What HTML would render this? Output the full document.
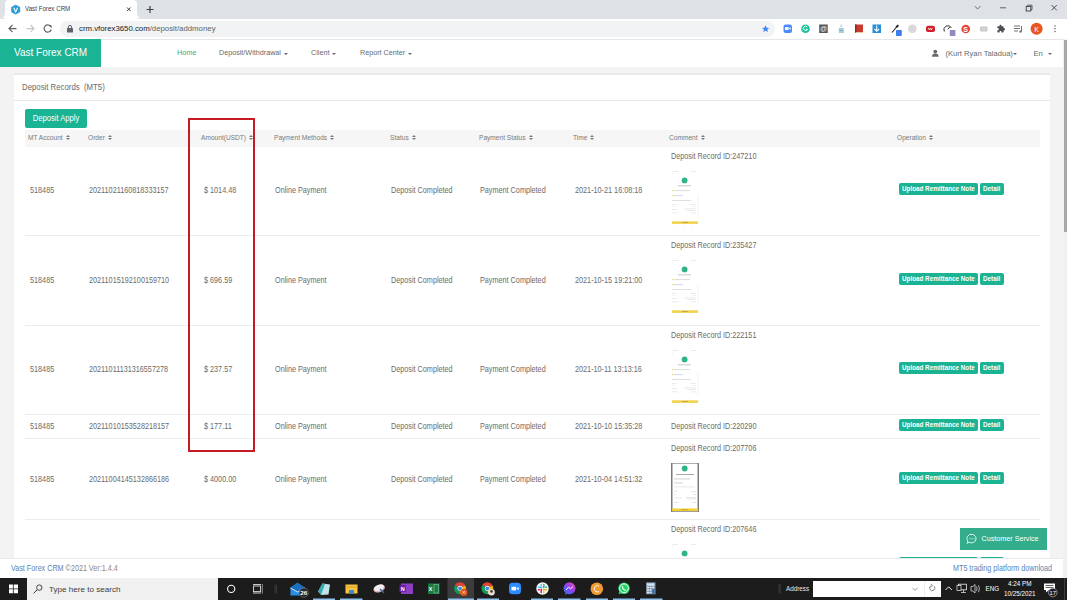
<!DOCTYPE html>
<html><head><meta charset="utf-8">
<style>
*{margin:0;padding:0;box-sizing:border-box}
html,body{width:1067px;height:600px;overflow:hidden;background:#f3f3f4;font-family:"Liberation Sans",sans-serif;color:#676a6c}
.a{position:absolute;white-space:nowrap}
#tabs{left:0;top:0;width:1067px;height:18.7px;background:#dee1e6}
#tab{left:5px;top:0;width:132px;height:19px;background:#fff;border-radius:4px 4px 0 0}
#toolbar{left:0;top:18.7px;width:1067px;height:20.3px;background:#fff}
#url{left:60px;top:21.3px;width:715px;height:15.5px;background:#f1f3f4;border-radius:8px}
#hdr{left:0;top:39px;width:1067px;height:28px;background:#fff}
#logo{left:0;top:39px;width:101px;height:28px;background:#1ab394;color:#fff;font-size:10px;line-height:28px;padding-left:14px}
.nav{top:47px;font-size:7.2px;line-height:12px;color:#676a6c}
.caret{display:inline-block;width:0;height:0;border-left:2.2px solid transparent;border-right:2.2px solid transparent;border-top:2.2px solid #676a6c;vertical-align:middle;margin-left:3px;position:relative;top:0.8px}
#panel{left:14px;top:73px;width:1036px;height:492px;background:#fff;border-top:2px solid #e9eaeb}
#ptitle{left:22px;top:81.5px;font-size:7.8px;line-height:12px;transform:scaleY(1.08);transform-origin:0 50%}
#pline{left:14px;top:100px;width:1036px;height:1px;background:#e7eaec}
.btn{background:#1ab394;color:#fff;border-radius:2px}
#dapply{left:25px;top:109px;width:62px;height:18.5px;font-size:7.6px;line-height:18.5px;text-align:center}
#thead{left:25px;top:130px;width:1015px;height:17px;background:#f6f6f6}
.th{top:133px;font-size:6.6px;line-height:10px;color:#7a7a7a}
.sort{display:inline-block;margin-left:3px;width:4px;height:5.4px;position:relative;vertical-align:-0.3px}.sort:before{content:"";position:absolute;left:0;top:0;border-left:2px solid transparent;border-right:2px solid transparent;border-bottom:2.3px solid #777}.sort:after{content:"";position:absolute;left:0;top:3.1px;border-left:2px solid transparent;border-right:2px solid transparent;border-top:2.3px solid #777}
.rl{left:25px;width:1015px;height:1px;background:#ececec}
.td{font-size:7.25px;line-height:10px;color:#6b6b6b;transform:scaleY(1.18);transform-origin:0 0}
.ub{font-size:6.3px;font-weight:bold;line-height:12.5px;height:12.5px;color:#fff;background:#1ab394;border-radius:2px}
#foot{left:0;top:558px;width:1063px;height:20px;background:#fff;border-top:1px solid #eaeaea}
#taskbar{left:0;top:578px;width:1067px;height:22px;background:#1c1c1c}
</style></head><body>
<div class="a" id="tabs"></div>
<div class="a" id="tab"></div>
<div class="a" id="toolbar"></div>
<div class="a" id="url"></div>
<svg class="a" style="left:0;top:0" width="1067" height="40" viewBox="0 0 1067 40">
 <!-- tab flare -->
 <path d="M0 18 Q5 18 5 13 L5 18 Z" fill="#fff"/>
 <path d="M137 13 Q137 18 142 18 L137 18 Z" fill="#fff"/>
 <!-- favicon -->
 <path d="M15.7 5 L19.9 7.3 L19.9 11.9 L15.7 14.2 L11.5 11.9 L11.5 7.3 Z" fill="#2b9bd6" stroke="#2b9bd6" stroke-width="0.6" stroke-linejoin="round"/>
 <path d="M13.8 7.7 L15.7 11.9 L17.6 7.7" stroke="#fff" stroke-width="1.1" fill="none"/>
 <!-- tab close x -->
 <path d="M127 7.5 L130.6 11.1 M130.6 7.5 L127 11.1" stroke="#3c4043" stroke-width="1"/>
 <!-- new tab + -->
 <path d="M150 6 L150 13 M146.5 9.5 L153.5 9.5" stroke="#3c4043" stroke-width="1.2"/>
 <!-- window controls -->
 <path d="M974.8 6.2 L977.6 9 L980.4 6.2" stroke="#5f6368" stroke-width="0.9" fill="none"/>
 <path d="M1000 7.8 L1006 7.8" stroke="#5f6368" stroke-width="1"/>
 <rect x="1026.2" y="6.4" width="4.6" height="4.6" fill="none" stroke="#3c4043" stroke-width="0.9"/>
 <path d="M1027.6 6.4 L1027.6 5.2 L1032 5.2 L1032 9.6 L1030.8 9.6" fill="none" stroke="#3c4043" stroke-width="0.8"/>
 <path d="M1051.5 5 L1056.8 10.3 M1056.8 5 L1051.5 10.3" stroke="#3c4043" stroke-width="0.9"/>
 <!-- toolbar -->
 <path d="M16.5 28.6 L9 28.6 M12.5 25 L9 28.6 L12.5 32.2" stroke="#5f6368" stroke-width="1.2" fill="none"/>
 <path d="M26.5 28.6 L34 28.6 M30.5 25 L34 28.6 L30.5 32.2" stroke="#c5c7ca" stroke-width="1.2" fill="none"/>
 <path d="M50.6 26.3 A3.6 3.6 0 1 0 51.2 29.5" stroke="#5f6368" stroke-width="1.2" fill="none"/>
 <path d="M48.6 25.2 L51.6 25.2 L51.6 28.2 Z" fill="#5f6368"/>
</svg>
<div class="a" style="left:25px;top:4.3px;font-size:6.2px;line-height:10px;color:#3c4043;transform:scaleY(1.15);transform-origin:0 50%">Vast Forex CRM</div>
<svg class="a" style="left:66px;top:24px" width="8" height="9" viewBox="0 0 8 9">
 <rect x="1" y="4" width="6" height="4.5" rx="0.6" fill="#5f6368"/>
 <path d="M2.4 4.2 V3 A1.6 1.6 0 0 1 5.6 3 V4.2" stroke="#5f6368" stroke-width="1" fill="none"/>
</svg>
<div class="a" style="left:79px;top:23.5px;font-size:7.8px;line-height:10px;color:#202124">crm.vforex3650.com<span style="color:#5f6368">/deposit/addmoney</span></div>
<svg class="a" style="left:755px;top:18px" width="312" height="21" viewBox="755 18 312 21">
 <!-- star -->
 <path d="M765.6 25.3 L766.7 27.7 L769.2 27.9 L767.3 29.5 L767.9 32 L765.6 30.7 L763.3 32 L763.9 29.5 L762 27.9 L764.5 27.7 Z" fill="#4285f4"/>
 <!-- zoom -->
 <rect x="783.5" y="24.5" width="8.5" height="8.5" rx="2" fill="#4a8cff"/>
 <rect x="785" y="27" width="3.6" height="3" fill="#fff"/><path d="M788.8 28.5 L790.6 27.2 L790.6 29.8 Z" fill="#fff"/>
 <!-- grammarly -->
 <circle cx="805.5" cy="28.7" r="4.3" fill="#15c39a"/>
 <path d="M807.3 27 A2.2 2.2 0 1 0 807.6 29.3 L805.7 29.3" stroke="#fff" stroke-width="1" fill="none"/>
 <!-- @ icon -->
 <rect x="819.2" y="24.5" width="8.5" height="8.5" fill="#555"/>
 <text x="823.5" y="31.3" font-size="7" font-family="Liberation Sans" fill="#eee" text-anchor="middle">@</text>
 <!-- bottle -->
 <rect x="838.8" y="28" width="5" height="5" fill="#a8ccd8"/><rect x="840.3" y="24.5" width="2" height="3" fill="#c9dfe8"/><rect x="839.5" y="30" width="3.5" height="1" fill="#7fb0c0"/>
 <!-- red book -->
 <rect x="855" y="24.5" width="8" height="8" fill="#c83a30"/><rect x="855" y="24.5" width="1.5" height="8" fill="#8e2a22"/><rect x="856" y="32" width="7" height="1" fill="#e8c8a0"/>
 <!-- download -->
 <rect x="872.5" y="24.5" width="8.5" height="8.5" fill="#2a8fd8"/>
 <path d="M876.7 25.5 V31 M874.5 29 L876.7 31.3 L879 29" stroke="#fff" stroke-width="1.1" fill="none"/>
 <!-- eyedropper -->
 <path d="M892 32.5 L896.5 27" stroke="#222" stroke-width="1.1"/>
 <path d="M895.5 26.5 L897.8 24.6 L899 25.8 L897 28 Z" fill="#222"/>
 <rect x="896" y="30" width="5.8" height="6" rx="0.8" fill="#3d7ff0"/>
 <!-- grey circle -->
 <circle cx="912.3" cy="28.7" r="4.3" fill="#d5d5d5"/>
 <circle cx="912.3" cy="28.7" r="2.5" fill="none" stroke="#e8e8e8" stroke-width="0.6"/>
 <!-- youtube red -->
 <rect x="926" y="25.8" width="9" height="6.2" rx="2" fill="#cf1f2a"/>
 <path d="M928.3 27.8 L929.3 30 L930.3 28.3 L931.3 30 L932.3 27.8" stroke="#fff" stroke-width="0.8" fill="none"/>
 <!-- speedometer -->
 <path d="M944.3 31.5 A3.9 3.9 0 1 1 951.5 28" stroke="#333" stroke-width="1" fill="none"/>
 <path d="M947.7 29.3 L950 26.8" stroke="#333" stroke-width="1"/>
 <rect x="949.8" y="30" width="5.6" height="6" rx="0.6" fill="#8e8bbd"/>
 <!-- S red -->
 <circle cx="965.7" cy="29" r="4.3" fill="#e8423a"/>
 <text x="965.7" y="31.6" font-size="7" font-family="Liberation Sans" font-weight="bold" fill="#fff" text-anchor="middle">S</text>
 <!-- grey cam -->
 <rect x="980" y="26.5" width="7.5" height="5" rx="1" fill="#c8c8c8"/><circle cx="983.7" cy="29" r="1.4" fill="none" stroke="#e6e6e6" stroke-width="0.6"/>
 <!-- puzzle -->
 <path transform="translate(996.6 24.3) scale(0.37)" d="M20.5 11H19V7c0-1.1-.9-2-2-2h-4V3.5C13 2.12 11.88 1 10.5 1S8 2.12 8 3.5V5H4c-1.1 0-1.99.9-1.99 2v3.8H3.5c1.49 0 2.7 1.21 2.7 2.7s-1.21 2.7-2.7 2.7H2V20c0 1.1.9 2 2 2h3.8v-1.5c0-1.490 1.21-2.7 2.7-2.7 1.49 0 2.7 1.21 2.7 2.7V22H17c1.1 0 2-.9 2-2v-4h1.5c1.38 0 2.5-1.12 2.5-2.5S21.88 11 20.5 11z" fill="#4a4d51"/>
 <!-- queue -->
 <path d="M1014 26 h6 M1014 28.5 h6 M1014 31 h4" stroke="#5f6368" stroke-width="0.9"/>
 <path d="M1021.5 26 V31.5" stroke="#5f6368" stroke-width="0.9"/>
 <circle cx="1020.5" cy="31.7" r="1.1" fill="#5f6368"/>
 <!-- avatar -->
 <circle cx="1036.6" cy="28.8" r="6" fill="#e8551e"/>
 <text x="1036.5" y="31.6" font-size="7" font-family="Liberation Sans" fill="#fff" text-anchor="middle">K</text>
 <!-- menu dots -->
 <circle cx="1055" cy="26" r="0.75" fill="#5f6368"/><circle cx="1055" cy="28.8" r="0.75" fill="#5f6368"/><circle cx="1055" cy="31.6" r="0.75" fill="#5f6368"/>
</svg>
<div class="a" id="hdr"></div>
<div class="a" style="left:0;top:39px;width:1067px;height:1px;background:#e6e6e6"></div>
<div class="a" id="logo">Vast Forex CRM</div>
<div class="a nav" style="left:177px;color:#1ab394">Home</div>
<div class="a nav" style="left:219px">Deposit/Withdrawal<span class="caret"></span></div>
<div class="a nav" style="left:311px">Client<span class="caret"></span></div>
<div class="a nav" style="left:360px">Report Center<span class="caret"></span></div>
<svg class="a" style="left:931px;top:49px" width="9" height="9" viewBox="0 0 9 9">
 <circle cx="4.3" cy="2.6" r="1.9" fill="#676a6c"/>
 <path d="M1 7.8 Q1 4.6 4.3 4.6 Q7.6 4.6 7.6 7.8 Z" fill="#676a6c"/>
</svg>
<div class="a nav" style="left:945.5px;top:47.6px;font-size:7.6px">(Kurt Ryan Taladua)<span class="caret" style="margin-left:0.5px"></span></div>
<div class="a nav" style="left:1033.5px;top:47.6px;font-size:7.6px">En<span class="caret" style="margin-left:5px"></span></div>
<div class="a" style="left:1063px;top:39px;width:4px;height:539px;background:#f1f1f1"></div>
<div class="a" style="left:1063.5px;top:40px;width:3.5px;height:192px;background:#a8a8a8"></div>

<div class="a" id="panel"></div>
<div class="a" id="ptitle">Deposit Records&nbsp;&nbsp;(MT5)</div>
<div class="a" id="pline"></div>
<div class="a btn" id="dapply"><span style="display:inline-block;transform:translateY(0.6px) scaleY(1.1)">Deposit Apply</span></div>
<div class="a" id="thead"></div>
<div class="a th" style="left:28px">MT Account<i class="sort"></i></div>
<div class="a th" style="left:88px">Order<i class="sort"></i></div>
<div class="a th" style="left:201px">Amount(USDT)<i class="sort"></i></div>
<div class="a th" style="left:274px">Payment Methods<i class="sort"></i></div>
<div class="a th" style="left:390px">Status<i class="sort"></i></div>
<div class="a th" style="left:479px">Payment Status<i class="sort"></i></div>
<div class="a th" style="left:573px">Time<i class="sort"></i></div>
<div class="a th" style="left:669px">Comment<i class="sort"></i></div>
<div class="a th" style="left:897px">Operation<i class="sort"></i></div>
<div class="a rl" style="top:235px"></div>
<div class="a td" style="left:30px;top:185.3px">518485</div>
<div class="a td" style="left:89px;top:185.3px">20211021160818333157</div>
<div class="a td" style="left:204px;top:185.3px">$ 1014.48</div>
<div class="a td" style="left:275px;top:185.3px">Online Payment</div>
<div class="a td" style="left:391px;top:185.3px">Deposit Completed</div>
<div class="a td" style="left:480px;top:185.3px">Payment Completed</div>
<div class="a td" style="left:575px;top:185.3px">2021-10-21 16:08:18</div>
<div class="a td" style="left:671px;top:151.3px">Deposit Record ID:247210</div>
<div class="a ub" style="left:899px;top:182.9px;width:79px;padding-left:3px">Upload Remittance Note</div>
<div class="a ub" style="left:980px;top:182.9px;width:24px;padding-left:3px">Detail</div>
<svg class="a" style="left:671px;top:168px" width="28" height="60" viewBox="0 0 28 60"><rect x="1" y="3" width="6" height="0.8" fill="#e6e6e6"/><rect x="20" y="3" width="5" height="0.8" fill="#e6e6e6"/><rect x="1" y="5.5" width="1" height="0.8" fill="#e6e6e6"/><circle cx="13.6" cy="12.4" r="2.9" fill="#30b385"/><rect x="7" y="17.3" width="13" height="1" fill="#c8c8c8"/><rect x="1" y="22" width="1.2" height="1.2" fill="#e8d870"/><rect x="3" y="22.2" width="16" height="0.9" fill="#d8d8d8"/><rect x="1" y="27" width="1.2" height="1.2" fill="#e8d870"/><rect x="3" y="27.2" width="9" height="0.9" fill="#d0d0f0"/><rect x="1" y="32" width="19" height="0.9" fill="#dcdcdc"/><rect x="1" y="36" width="4" height="0.8" fill="#e6e6e6"/><rect x="19" y="36" width="6" height="0.8" fill="#e6e6e6"/><rect x="1" y="38" width="3" height="0.8" fill="#eee"/><rect x="22" y="38" width="3" height="0.8" fill="#eee"/><rect x="1" y="41" width="5" height="0.8" fill="#e6e6e6"/><rect x="13" y="40.5" width="12" height="0.8" fill="#e6e6e6"/><rect x="16" y="42" width="9" height="0.8" fill="#e6e6e6"/><rect x="1" y="44.5" width="6" height="0.8" fill="#e6e6e6"/><rect x="20" y="44.5" width="5" height="0.8" fill="#e6e6e6"/><rect x="26.5" y="26" width="0.8" height="22" fill="#f2f2f2"/><rect x="1" y="53.3" width="26" height="2.6" fill="#f2d34c"/><rect x="11" y="54.2" width="6" height="0.8" fill="#b8a040"/><rect x="6" y="58" width="1" height="0.8" fill="#e6e6e6"/><rect x="13" y="58" width="1" height="0.8" fill="#e6e6e6"/><rect x="20" y="58" width="1" height="0.8" fill="#e6e6e6"/></svg>
<div class="a rl" style="top:325px"></div>
<div class="a td" style="left:30px;top:275.3px">518485</div>
<div class="a td" style="left:89px;top:275.3px">20211015192100159710</div>
<div class="a td" style="left:204px;top:275.3px">$ 696.59</div>
<div class="a td" style="left:275px;top:275.3px">Online Payment</div>
<div class="a td" style="left:391px;top:275.3px">Deposit Completed</div>
<div class="a td" style="left:480px;top:275.3px">Payment Completed</div>
<div class="a td" style="left:575px;top:275.3px">2021-10-15 19:21:00</div>
<div class="a td" style="left:671px;top:240.3px">Deposit Record ID:235427</div>
<div class="a ub" style="left:899px;top:272.9px;width:79px;padding-left:3px">Upload Remittance Note</div>
<div class="a ub" style="left:980px;top:272.9px;width:24px;padding-left:3px">Detail</div>
<svg class="a" style="left:671px;top:257px" width="28" height="60" viewBox="0 0 28 60"><rect x="1" y="3" width="6" height="0.8" fill="#e6e6e6"/><rect x="20" y="3" width="5" height="0.8" fill="#e6e6e6"/><rect x="1" y="5.5" width="1" height="0.8" fill="#e6e6e6"/><circle cx="13.6" cy="12.4" r="2.9" fill="#30b385"/><rect x="7" y="17.3" width="13" height="1" fill="#c8c8c8"/><rect x="1" y="22" width="1.2" height="1.2" fill="#e8d870"/><rect x="3" y="22.2" width="16" height="0.9" fill="#d8d8d8"/><rect x="1" y="27" width="1.2" height="1.2" fill="#e8d870"/><rect x="3" y="27.2" width="9" height="0.9" fill="#d0d0f0"/><rect x="1" y="32" width="19" height="0.9" fill="#dcdcdc"/><rect x="1" y="36" width="4" height="0.8" fill="#e6e6e6"/><rect x="19" y="36" width="6" height="0.8" fill="#e6e6e6"/><rect x="1" y="38" width="3" height="0.8" fill="#eee"/><rect x="22" y="38" width="3" height="0.8" fill="#eee"/><rect x="1" y="41" width="5" height="0.8" fill="#e6e6e6"/><rect x="13" y="40.5" width="12" height="0.8" fill="#e6e6e6"/><rect x="16" y="42" width="9" height="0.8" fill="#e6e6e6"/><rect x="1" y="44.5" width="6" height="0.8" fill="#e6e6e6"/><rect x="20" y="44.5" width="5" height="0.8" fill="#e6e6e6"/><rect x="26.5" y="26" width="0.8" height="22" fill="#f2f2f2"/><rect x="1" y="53.3" width="26" height="2.6" fill="#f2d34c"/><rect x="11" y="54.2" width="6" height="0.8" fill="#b8a040"/><rect x="6" y="58" width="1" height="0.8" fill="#e6e6e6"/><rect x="13" y="58" width="1" height="0.8" fill="#e6e6e6"/><rect x="20" y="58" width="1" height="0.8" fill="#e6e6e6"/></svg>
<div class="a rl" style="top:414px"></div>
<div class="a td" style="left:30px;top:364.3px">518485</div>
<div class="a td" style="left:89px;top:364.3px">20211011131316557278</div>
<div class="a td" style="left:204px;top:364.3px">$ 237.57</div>
<div class="a td" style="left:275px;top:364.3px">Online Payment</div>
<div class="a td" style="left:391px;top:364.3px">Deposit Completed</div>
<div class="a td" style="left:480px;top:364.3px">Payment Completed</div>
<div class="a td" style="left:575px;top:364.3px">2021-10-11 13:13:16</div>
<div class="a td" style="left:671px;top:329.8px">Deposit Record ID:222151</div>
<div class="a ub" style="left:899px;top:361.9px;width:79px;padding-left:3px">Upload Remittance Note</div>
<div class="a ub" style="left:980px;top:361.9px;width:24px;padding-left:3px">Detail</div>
<svg class="a" style="left:671px;top:347px" width="28" height="60" viewBox="0 0 28 60"><rect x="1" y="3" width="6" height="0.8" fill="#e6e6e6"/><rect x="20" y="3" width="5" height="0.8" fill="#e6e6e6"/><rect x="1" y="5.5" width="1" height="0.8" fill="#e6e6e6"/><circle cx="13.6" cy="12.4" r="2.9" fill="#30b385"/><rect x="7" y="17.3" width="13" height="1" fill="#c8c8c8"/><rect x="1" y="22" width="1.2" height="1.2" fill="#e8d870"/><rect x="3" y="22.2" width="16" height="0.9" fill="#d8d8d8"/><rect x="1" y="27" width="1.2" height="1.2" fill="#e8d870"/><rect x="3" y="27.2" width="9" height="0.9" fill="#d0d0f0"/><rect x="1" y="32" width="19" height="0.9" fill="#dcdcdc"/><rect x="1" y="36" width="4" height="0.8" fill="#e6e6e6"/><rect x="19" y="36" width="6" height="0.8" fill="#e6e6e6"/><rect x="1" y="38" width="3" height="0.8" fill="#eee"/><rect x="22" y="38" width="3" height="0.8" fill="#eee"/><rect x="1" y="41" width="5" height="0.8" fill="#e6e6e6"/><rect x="13" y="40.5" width="12" height="0.8" fill="#e6e6e6"/><rect x="16" y="42" width="9" height="0.8" fill="#e6e6e6"/><rect x="1" y="44.5" width="6" height="0.8" fill="#e6e6e6"/><rect x="20" y="44.5" width="5" height="0.8" fill="#e6e6e6"/><rect x="26.5" y="26" width="0.8" height="22" fill="#f2f2f2"/><rect x="1" y="53.3" width="26" height="2.6" fill="#f2d34c"/><rect x="11" y="54.2" width="6" height="0.8" fill="#b8a040"/><rect x="6" y="58" width="1" height="0.8" fill="#e6e6e6"/><rect x="13" y="58" width="1" height="0.8" fill="#e6e6e6"/><rect x="20" y="58" width="1" height="0.8" fill="#e6e6e6"/></svg>
<div class="a rl" style="top:438px"></div>
<div class="a td" style="left:30px;top:421.3px">518485</div>
<div class="a td" style="left:89px;top:421.3px">20211010153528218157</div>
<div class="a td" style="left:204px;top:421.3px">$ 177.11</div>
<div class="a td" style="left:275px;top:421.3px">Online Payment</div>
<div class="a td" style="left:391px;top:421.3px">Deposit Completed</div>
<div class="a td" style="left:480px;top:421.3px">Payment Completed</div>
<div class="a td" style="left:575px;top:421.3px">2021-10-10 15:35:28</div>
<div class="a td" style="left:671px;top:421.3px">Deposit Record ID:220290</div>
<div class="a ub" style="left:899px;top:418.9px;width:79px;padding-left:3px">Upload Remittance Note</div>
<div class="a ub" style="left:980px;top:418.9px;width:24px;padding-left:3px">Detail</div>
<div class="a rl" style="top:519px"></div>
<div class="a td" style="left:30px;top:474.3px">518485</div>
<div class="a td" style="left:89px;top:474.3px">20211004145132866186</div>
<div class="a td" style="left:204px;top:474.3px">$ 4000.00</div>
<div class="a td" style="left:275px;top:474.3px">Online Payment</div>
<div class="a td" style="left:391px;top:474.3px">Deposit Completed</div>
<div class="a td" style="left:480px;top:474.3px">Payment Completed</div>
<div class="a td" style="left:575px;top:474.3px">2021-10-04 14:51:32</div>
<div class="a td" style="left:671px;top:443.3px">Deposit Record ID:207706</div>
<div class="a ub" style="left:899px;top:471.9px;width:79px;padding-left:3px">Upload Remittance Note</div>
<div class="a ub" style="left:980px;top:471.9px;width:24px;padding-left:3px">Detail</div>
<svg class="a" style="left:671px;top:463px" width="28" height="49" viewBox="0 0 28 49"><rect x="0" y="0" width="28" height="49" fill="#fff"/><rect x="0" y="0" width="28" height="0.8" fill="#9a9a9a"/><rect x="0" y="0" width="1.5" height="49" fill="#7a7a7a"/><rect x="26.5" y="0" width="1.5" height="49" fill="#7a7a7a"/><rect x="0" y="48.2" width="28" height="0.8" fill="#888"/><circle cx="13.7" cy="5.5" r="2.9" fill="#30b385"/><rect x="5" y="11" width="18" height="1" fill="#aaa"/><rect x="3" y="15.5" width="16" height="0.9" fill="#ccc"/><rect x="3" y="19.5" width="9" height="0.9" fill="#ccc"/><rect x="3" y="23.5" width="21" height="0.8" fill="#e2e2e2"/><rect x="3" y="28" width="3" height="0.8" fill="#ddd"/><rect x="20" y="28" width="5" height="0.8" fill="#ddd"/><rect x="3" y="31" width="2" height="0.8" fill="#e2e2e2"/><rect x="22" y="31" width="3" height="0.8" fill="#e2e2e2"/><rect x="3" y="34.5" width="8" height="0.8" fill="#e2e2e2"/><rect x="15" y="34" width="10" height="0.8" fill="#ddd"/><rect x="16" y="35.5" width="9" height="0.8" fill="#e2e2e2"/><rect x="3" y="39" width="5" height="0.8" fill="#e2e2e2"/><rect x="21" y="39" width="4" height="0.8" fill="#ddd"/><rect x="1" y="45.5" width="26" height="2.5" fill="#f2d030"/><rect x="10" y="46.3" width="7" height="0.8" fill="#b8a040"/></svg>
<div class="a td" style="left:671px;top:524.3px">Deposit Record ID:207646</div>
<div class="a ub" style="left:899px;top:557.1px;width:79px;padding-left:3px">Upload Remittance Note</div>
<div class="a ub" style="left:980px;top:557.1px;width:24px;padding-left:3px">Detail</div>
<svg class="a" style="left:671px;top:541px" width="28" height="60" viewBox="0 0 28 60"><rect x="1" y="3" width="6" height="0.8" fill="#e6e6e6"/><rect x="20" y="3" width="5" height="0.8" fill="#e6e6e6"/><rect x="1" y="5.5" width="1" height="0.8" fill="#e6e6e6"/><circle cx="13.6" cy="12.4" r="2.9" fill="#30b385"/><rect x="7" y="17.3" width="13" height="1" fill="#c8c8c8"/><rect x="1" y="22" width="1.2" height="1.2" fill="#e8d870"/><rect x="3" y="22.2" width="16" height="0.9" fill="#d8d8d8"/><rect x="1" y="27" width="1.2" height="1.2" fill="#e8d870"/><rect x="3" y="27.2" width="9" height="0.9" fill="#d0d0f0"/><rect x="1" y="32" width="19" height="0.9" fill="#dcdcdc"/><rect x="1" y="36" width="4" height="0.8" fill="#e6e6e6"/><rect x="19" y="36" width="6" height="0.8" fill="#e6e6e6"/><rect x="1" y="38" width="3" height="0.8" fill="#eee"/><rect x="22" y="38" width="3" height="0.8" fill="#eee"/><rect x="1" y="41" width="5" height="0.8" fill="#e6e6e6"/><rect x="13" y="40.5" width="12" height="0.8" fill="#e6e6e6"/><rect x="16" y="42" width="9" height="0.8" fill="#e6e6e6"/><rect x="1" y="44.5" width="6" height="0.8" fill="#e6e6e6"/><rect x="20" y="44.5" width="5" height="0.8" fill="#e6e6e6"/><rect x="26.5" y="26" width="0.8" height="22" fill="#f2f2f2"/><rect x="1" y="53.3" width="26" height="2.6" fill="#f2d34c"/><rect x="11" y="54.2" width="6" height="0.8" fill="#b8a040"/><rect x="6" y="58" width="1" height="0.8" fill="#e6e6e6"/><rect x="13" y="58" width="1" height="0.8" fill="#e6e6e6"/><rect x="20" y="58" width="1" height="0.8" fill="#e6e6e6"/></svg><div class="a" style="left:188px;top:118px;width:67px;height:334px;border:2px solid #c41b24"></div>
<div class="a" id="foot"></div>
<div class="a" style="left:11px;top:563.5px;font-size:7.2px;line-height:10px;color:#888;transform:scaleY(1.15);transform-origin:0 70%"><span style="color:#5a83b3">Vast Forex CRM</span> ©2021 Ver:1.4.4</div>
<div class="a" style="left:953px;top:563.5px;font-size:7.2px;line-height:10px;color:#5a83b3;transform:scaleY(1.15);transform-origin:0 70%">MT5 trading platform download</div>
<div class="a" style="left:960px;top:528px;width:87px;height:22px;background:#33ad8c;color:#fff;font-size:7.2px;line-height:22px;padding-left:21.5px">Customer Service</div>
<svg class="a" style="left:966px;top:533px" width="12" height="12" viewBox="0 0 12 12">
 <path d="M6 1.3 A4.6 4.3 0 1 1 3 9.2 L1.2 10.4 L1.8 8.2 A4.6 4.3 0 0 1 6 1.3 Z" fill="none" stroke="#fff" stroke-width="0.8"/>
 <circle cx="4" cy="5.7" r="0.55" fill="#fff"/><circle cx="6" cy="5.7" r="0.55" fill="#fff"/><circle cx="8" cy="5.7" r="0.55" fill="#fff"/>
</svg>
<div class="a" id="taskbar"></div>
<div class="a" style="left:27px;top:578px;width:191px;height:22px;background:#f0f0f0"></div>
<div class="a" style="left:49px;top:583.8px;font-size:8.1px;line-height:11px;color:#404040">Type here to search</div>
<div class="a" style="left:786px;top:584px;font-size:6.3px;line-height:10px;color:#e8e8e8">Address</div>
<div class="a" style="left:813px;top:581px;width:128px;height:16px;background:#fff"></div>
<div class="a" style="left:1008px;top:578.5px;font-size:6.3px;line-height:10px;color:#fff">4:24 PM</div>
<div class="a" style="left:1004px;top:588.5px;font-size:6.3px;line-height:10px;color:#fff">10/25/2021</div>
<div class="a" style="left:985.5px;top:583.8px;font-size:6.3px;line-height:10px;color:#fff">ENG</div>
<svg class="a" style="left:0;top:578px" width="1067" height="22" viewBox="0 578 1067 22">
 <!-- windows logo -->
 <path d="M9 584.6 H12.9 V588.5 H9 Z M13.7 584.6 H18 V588.5 H13.7 Z M9 589.3 H12.9 V593.2 H9 Z M13.7 589.3 H18 V593.2 H13.7 Z" fill="#fff"/>
 <!-- magnifier -->
 <circle cx="39.3" cy="587.6" r="2.7" fill="none" stroke="#333" stroke-width="0.9"/>
 <path d="M37.3 589.7 L33.6 593.3" stroke="#333" stroke-width="1"/>
 <!-- cortana -->
 <circle cx="231.2" cy="588.9" r="3.6" fill="none" stroke="#fff" stroke-width="1.1"/>
 <!-- task view -->
 <path d="M253 584.5 H261 M253 593 H261" stroke="#ddd" stroke-width="0.9"/>
 <rect x="253.5" y="586" width="7" height="5.6" fill="none" stroke="#ddd" stroke-width="0.9"/>
 <path d="M262.3 584 V593.5" stroke="#ddd" stroke-width="0.6"/>
 <path d="M275 584.5 V593.5 M276.5 584.5 V593.5" stroke="#555" stroke-width="0.5"/>
 <!-- mail -->
 <path d="M290.5 587.5 L297.5 582.8 L304.5 587.5 V595.5 H290.5 Z" fill="#2b8ee0"/>
 <path d="M290.5 587.5 L297.5 582.8 L304.5 587.5 L297.5 591.5 Z" fill="#1a6fc0"/>
 <path d="M290.5 588 L297.5 592 L304.5 588" stroke="#e0f0ff" stroke-width="0.9" fill="none"/>
 <circle cx="303.8" cy="592.7" r="4.7" fill="#2a2a2a" stroke="#888" stroke-width="0.5"/>
 <text x="303.8" y="595" font-size="6.2" font-family="Liberation Sans" font-weight="bold" fill="#fff" text-anchor="middle">26</text>
 <!-- notes -->
 <path d="M318 591.5 L322.5 583.5 L330 584.5 L328.5 594.5 L321.5 595 Z" fill="#bfe3e6"/>
 <path d="M318 591.5 L322.5 583.5 L325 584 L321 595 Z" fill="#3aa8b0"/>
 <!-- folder -->
 <rect x="345.5" y="584.5" width="12" height="9" fill="#f6c343"/>
 <rect x="345.5" y="586.5" width="12" height="1.2" fill="#e0a92a"/>
 <rect x="349" y="590" width="5" height="3.5" fill="#2f8de0"/>
 <!-- satellite -->
 <ellipse cx="379" cy="588.5" rx="6" ry="3.8" fill="#d9a8ac" transform="rotate(-20 379 588)"/><ellipse cx="379" cy="587.8" rx="5.2" ry="3" fill="#f2eeee" transform="rotate(-20 379 588)"/>
 
 <path d="M380 589 L384 593" stroke="#2a6fb0" stroke-width="1.5"/>
 <!-- onenote -->
 <rect x="401" y="583.5" width="12" height="10.5" fill="#8d3fc4"/>
 <rect x="399.5" y="585" width="6.5" height="7" fill="#6a1fa8"/>
 <text x="402.7" y="591" font-size="5.5" font-family="Liberation Sans" font-weight="bold" fill="#fff" text-anchor="middle">N</text>
 <!-- excel -->
 <rect x="428" y="583.5" width="11.5" height="10.5" fill="#1d7a45"/>
 <rect x="434" y="584.5" width="4.5" height="8.5" fill="none" stroke="#7ec89b" stroke-width="0.6"/>
 <text x="430.5" y="591.3" font-size="5.8" font-family="Liberation Sans" font-weight="bold" fill="#fff" text-anchor="middle">X</text>
 <!-- chrome active bg -->
 <rect x="447.5" y="578" width="26.5" height="22" fill="#3c3c3c"/>
 <path d="M460 588.3 L454.80 585.30 A6 6 0 0 1 465.20 585.30 Z" fill="#db4437"/>
 <path d="M460 588.3 L465.20 585.30 A6 6 0 0 1 460.00 594.30 Z" fill="#f4b400"/>
 <path d="M460 588.3 L460.00 594.30 A6 6 0 0 1 454.80 585.30 Z" fill="#0f9d58"/>
 <circle cx="460" cy="588.3" r="2.52" fill="#fff"/><circle cx="460" cy="588.3" r="1.92" fill="#4285f4"/>
 <circle cx="463.8" cy="592.3" r="3.6" fill="#e8521f"/>
 <path d="M462.6 591.1 L465 593.5 M465 591.1 L462.6 593.5" stroke="#fff" stroke-width="0.7"/>
 <!-- chrome 2 -->
 <path d="M487.3 588.3 L482.10 585.30 A6 6 0 0 1 492.50 585.30 Z" fill="#db4437"/>
 <path d="M487.3 588.3 L492.50 585.30 A6 6 0 0 1 487.30 594.30 Z" fill="#f4b400"/>
 <path d="M487.3 588.3 L487.30 594.30 A6 6 0 0 1 482.10 585.30 Z" fill="#0f9d58"/>
 <circle cx="487.3" cy="588.3" r="2.52" fill="#fff"/><circle cx="487.3" cy="588.3" r="1.92" fill="#4285f4"/>
 <circle cx="491.5" cy="592.2" r="3.3" fill="#e9e0d8"/>
 <circle cx="491.5" cy="591.4" r="1.3" fill="#4a3a32"/>
 <!-- zoom -->
 <rect x="509" y="582.8" width="12" height="11.5" rx="3.5" fill="#2d8cff"/>
 <rect x="511.5" y="586.8" width="4.6" height="3.6" fill="#fff"/><path d="M516.3 588.6 L518.7 587 V590.2 Z" fill="#fff"/>
 <!-- slack -->
 <circle cx="542.5" cy="588.5" r="6.2" fill="#f6f6f6"/>
 <g stroke-linecap="round" stroke-width="1.5">
 <path d="M538.5 587.2 H541.8" stroke="#36c5f0"/><path d="M541.2 584.5 V585.3" stroke="#36c5f0"/>
 <path d="M543.8 584.5 V587.8" stroke="#2eb67d"/><path d="M546.5 587.2 H545.7" stroke="#2eb67d"/>
 <path d="M543.2 589.8 H546.5" stroke="#ecb22e"/><path d="M543.8 592.5 V591.7" stroke="#ecb22e"/>
 <path d="M541.2 589.2 V592.5" stroke="#e01e5a"/><path d="M538.5 589.8 H539.3" stroke="#e01e5a"/>
 </g>
 <!-- messenger -->
 <defs><linearGradient id="msg" x1="0" y1="1" x2="1" y2="0"><stop offset="0" stop-color="#1b7cf5"/><stop offset="0.55" stop-color="#9b3cf0"/><stop offset="1" stop-color="#f0508c"/></linearGradient></defs><circle cx="569.5" cy="588.3" r="6" fill="url(#msg)"/><path d="M565.5 592.5 L565.2 595 L567.8 593.6 Z" fill="#3a6cf0"/>
 <path d="M566 590 L568.5 587.2 L570.5 588.8 L573 586.5" stroke="#fff" stroke-width="1" fill="none"/>
 <!-- C -->
 <circle cx="596.8" cy="588.8" r="6.3" fill="#f09a2f"/>
 <path d="M599 586 A3.2 3.2 0 1 0 599 591.6" stroke="#fff" stroke-width="1" fill="none"/>
 <!-- whatsapp -->
 <circle cx="624" cy="588.3" r="5.8" fill="#25d366"/>
 <path d="M619.5 594 L620.5 591" stroke="#25d366" stroke-width="2"/>
 <circle cx="624" cy="588.3" r="4.4" fill="none" stroke="#fff" stroke-width="0.9"/>
 <path d="M622.5 586.2 Q622.5 590 626 590.2" stroke="#fff" stroke-width="1.1" fill="none"/>
 <!-- calculator -->
 <rect x="646" y="582.3" width="9.5" height="12" fill="#7a8da0"/>
 <rect x="647" y="583.3" width="7.5" height="2.5" fill="#cfe5f5"/>
 <path d="M647 587.5 h2 m0.6 0 h2 m0.6 0 h2 M647 590 h2 m0.6 0 h2 M647 592.5 h2 m0.6 0 h2" stroke="#e8eef3" stroke-width="1.4"/>
 <rect x="652.4" y="589.3" width="2" height="4.3" fill="#1e6ec8"/>
 <!-- underlines -->
 <g fill="#8fc3ee">
  <rect x="313" y="598.5" width="22" height="1.5"/><rect x="340" y="598.5" width="22.5" height="1.5"/>
  <rect x="448" y="598.5" width="26" height="1.5"/><rect x="477" y="598.5" width="22" height="1.5"/>
  <rect x="531" y="598.5" width="22" height="1.5"/><rect x="558" y="598.5" width="22.5" height="1.5"/>
  <rect x="586" y="598.5" width="22" height="1.5"/><rect x="613" y="598.5" width="22" height="1.5"/>
  <rect x="640" y="598.5" width="22.5" height="1.5"/>
 </g>
 <path d="M779 584 V593.5 M780.2 584 V593.5" stroke="#555" stroke-width="0.5"/>
 <path d="M912.5 588 L915 590.3 L917.5 588" stroke="#666" stroke-width="0.7" fill="none"/>
 <path d="M924.5 581 V597" stroke="#ddd" stroke-width="0.5"/>
 <path d="M934.2 586.3 A2.6 2.6 0 1 1 931.2 585.6" stroke="#777" stroke-width="0.9" fill="none"/>
 <path d="M930.6 584.2 L932.6 585.4 L930.9 587" stroke="#777" stroke-width="0.8" fill="none"/>
 <!-- tray -->
 <path d="M945.5 590 L948.7 586.8 L951.9 590" stroke="#fff" stroke-width="0.9" fill="none"/>
 <rect x="958.5" y="584.2" width="8" height="5.6" fill="none" stroke="#eee" stroke-width="0.8"/>
 <rect x="957" y="585.5" width="4" height="5" fill="#1c1c1c" stroke="#eee" stroke-width="0.7"/>
 <path d="M961 592.5 H966 M963.5 590 V592.5" stroke="#eee" stroke-width="0.7"/>
 <path d="M971 586.5 H972.8 L975 584.5 V593 L972.8 591 H971 Z" fill="none" stroke="#eee" stroke-width="0.7"/>
 <path d="M976.5 586.5 Q977.6 588.7 976.5 591 M978.5 585.3 Q980.3 588.7 978.5 592.2" stroke="#eee" stroke-width="0.7" fill="none"/>
 <!-- notification -->
 <path d="M1044 583.5 H1055 V590 H1049 L1046 592.5 V590 H1044 Z" fill="#fff"/>
 <path d="M1045.5 585.5 H1053.5 M1045.5 587.5 H1053.5" stroke="#1c1c1c" stroke-width="0.7"/>
 <circle cx="1052.8" cy="592.5" r="4.3" fill="#1c1c1c" stroke="#ccc" stroke-width="0.6"/>
 <text x="1052.8" y="594.7" font-size="5.8" font-family="Liberation Sans" fill="#fff" text-anchor="middle">17</text>
 <path d="M1064.5 578 V600" stroke="#555" stroke-width="0.6"/>
</svg>
</body></html>
